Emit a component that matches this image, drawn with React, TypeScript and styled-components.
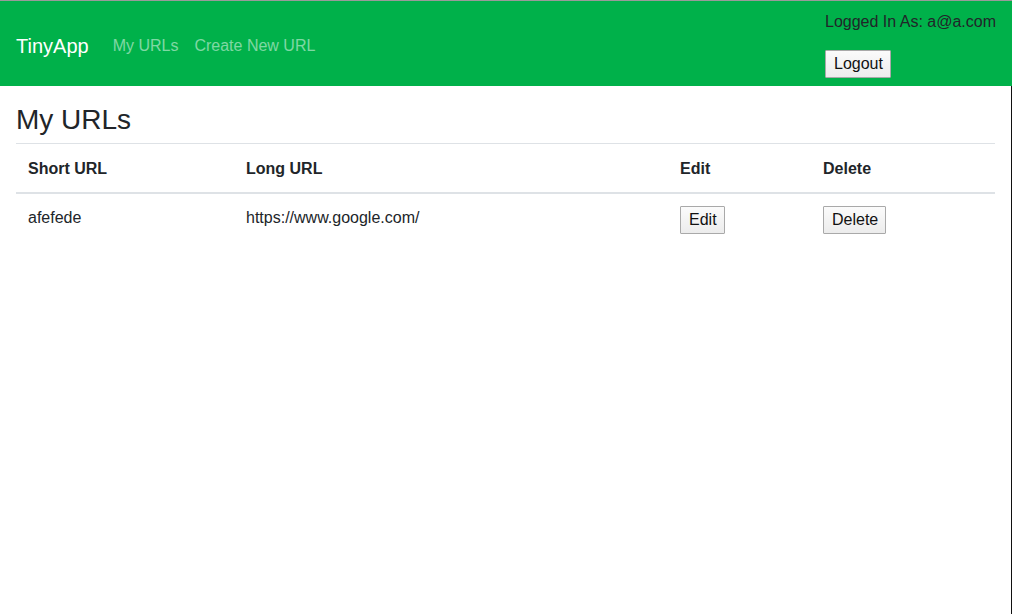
import { createGlobalStyle } from 'styled-components';
import styled from 'styled-components';

type Url = {
  short: string;
  long: string;
};

const urls: Url[] = [{ short: 'afefede', long: 'https://www.google.com/' }];

export default function App() {
  return (
    <Page>
      <GlobalStyle />
      <Navbar>
        <NavLeft>
          <Brand href="#">TinyApp</Brand>
          <NavLink href="#">My URLs</NavLink>
          <NavLink href="#">Create New URL</NavLink>
        </NavLeft>
        <UserBox>
          <UserText>Logged In As: a@a.com</UserText>
          <form onSubmit={e => e.preventDefault()}>
            <Btn type="submit">Logout</Btn>
          </form>
        </UserBox>
      </Navbar>
      <Main>
        <Title>My URLs</Title>
        <Table>
          <thead>
            <tr>
              <Th $w={218}>Short URL</Th>
              <Th $w={434}>Long URL</Th>
              <Th $w={143}>Edit</Th>
              <Th $w={184}>Delete</Th>
            </tr>
          </thead>
          <tbody>
            {urls.map(({ short, long }) => (
              <tr key={short}>
                <Td>{short}</Td>
                <Td>{long}</Td>
                <Td>
                  <Btn type="button">Edit</Btn>
                </Td>
                <Td>
                  <Btn type="button">Delete</Btn>
                </Td>
              </tr>
            ))}
          </tbody>
        </Table>
      </Main>
    </Page>
  );
}

const GlobalStyle = createGlobalStyle`
  * {
    box-sizing: border-box;
  }

  body {
    margin: 0;
    background: #fff;
    font-family: "Liberation Sans", Arial, sans-serif;
    font-size: 16px;
    line-height: 1.5;
    color: #212529;
  }
`;

const Page = styled.div`
  min-height: 100vh;
  width: 1012px;
  display: flex;
  flex-direction: column;
`;

const Navbar = styled.nav`
  height: 86px;
  border-top: 1px solid #9a9a9a;
  background: #00b14a;
  padding: 8px 17px 7px 16px;
  display: flex;
  flex-flow: row nowrap;
  justify-content: space-between;
  align-items: center;
`;

const NavLeft = styled.div`
  display: flex;
  align-items: center;
  margin-top: 3px;
`;

const Brand = styled.a`
  color: #fff;
  font-size: 20px;
  line-height: 30px;
  text-decoration: none;
  margin-right: 16px;
`;

const NavLink = styled.a`
  color: rgba(255, 255, 255, 0.5);
  font-size: 16px;
  padding: 8px;
  text-decoration: none;
`;

const UserBox = styled.div`
  display: flex;
  flex-direction: column;
  align-items: flex-start;
  gap: 16px;
  width: 170px;
  align-self: stretch;
  padding-top: 1px;
`;

const UserText = styled.span`
  color: #212529;
  line-height: 24px;
  white-space: nowrap;
`;

const Btn = styled.button`
  font-family: "Liberation Sans", Arial, sans-serif;
  font-size: 16px;
  height: 28px;
  padding: 0 7px 0 8px;
  color: #111;
  background: linear-gradient(#fbfbfb, #ececec);
  border: 1px solid #a9a9a9;
  border-radius: 1px;
  cursor: pointer;
`;

const Main = styled.main`
  flex: 1;
  padding: 17px 16px 0;
  border-right: 1px solid #111;
`;

const Title = styled.h3`
  margin: 0 0 6px;
  font-size: 28px;
  font-weight: 500;
  line-height: 34px;
`;

const Table = styled.table`
  width: 979px;
  border-collapse: collapse;
  table-layout: fixed;
`;

const Th = styled.th<{ $w: number }>`
  width: ${props => props.$w}px;
  padding: 13px 12px 11px;
  text-align: left;
  font-weight: 700;
  border-top: 1px solid #dee2e6;
  border-bottom: 2px solid #dee2e6;
`;

const Td = styled.td`
  padding: 12px;
  vertical-align: top;
  border-top: 1px solid transparent;
`;
